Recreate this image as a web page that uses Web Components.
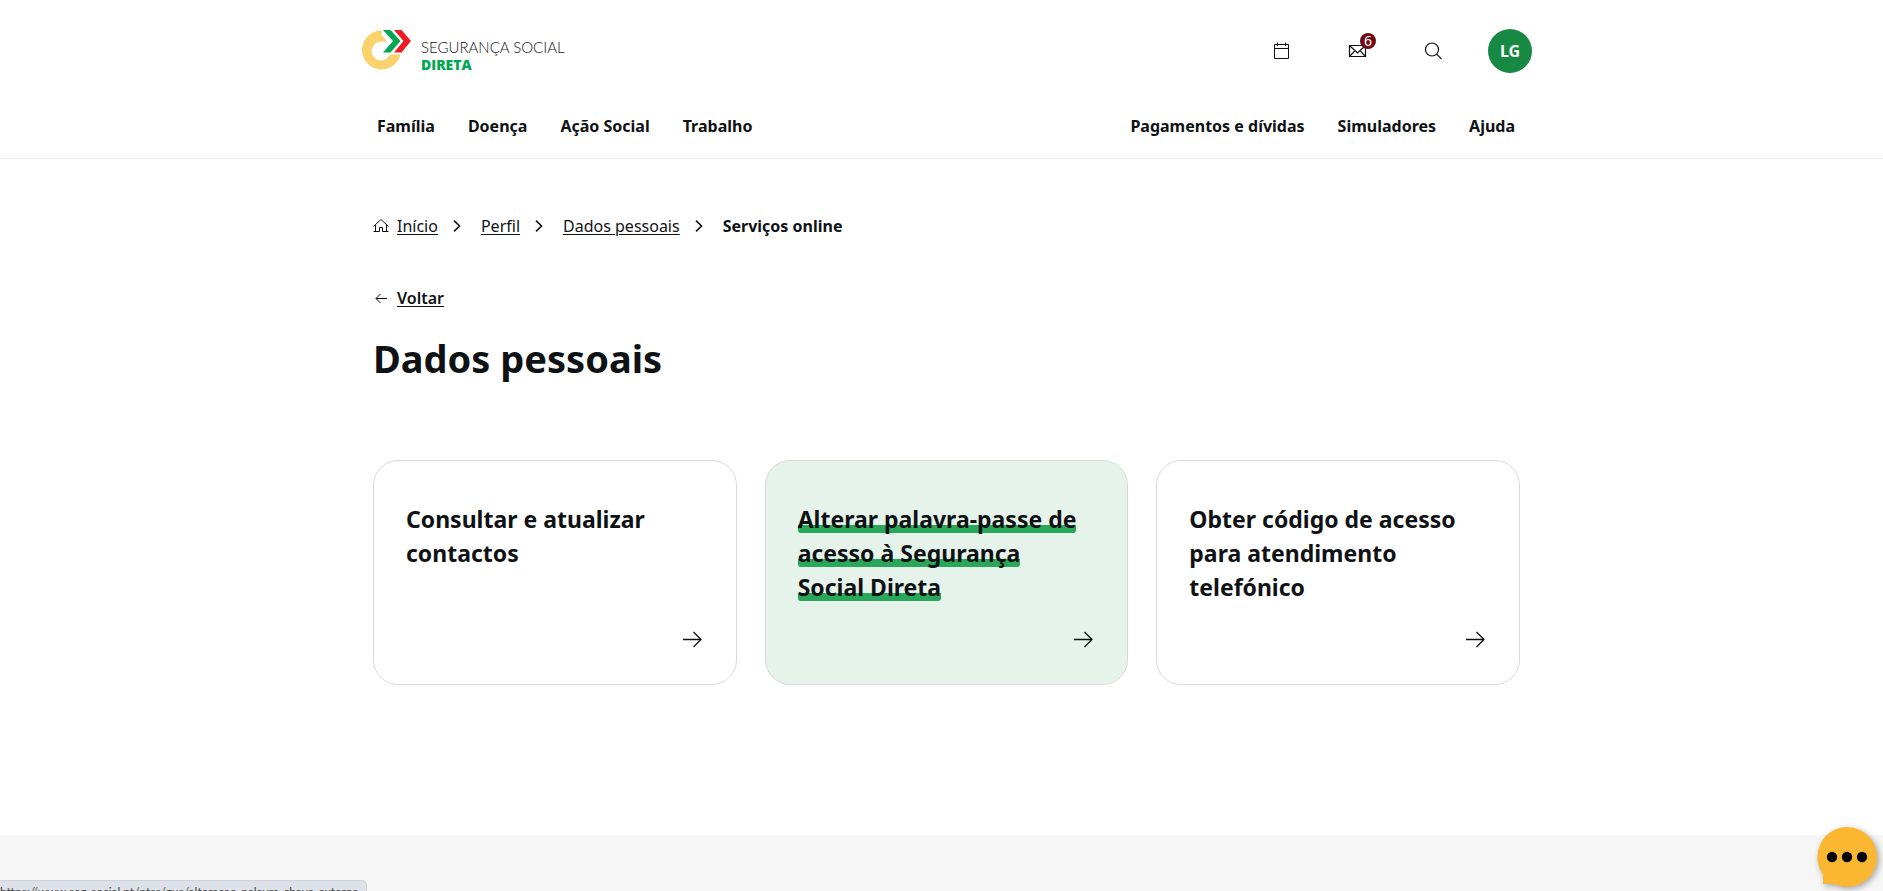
<!DOCTYPE html>
<html lang="pt">
<head>
<meta charset="utf-8">
<title>Dados pessoais</title>
<style>
html, body { margin: 0; height: 100%; }
body { font: 16px/24px "Noto Sans", "Open Sans", sans-serif; color: #0f1214; background: #fff; }
</style>
</head>
<body>
<ss-page></ss-page>
<script>
const define = (name, html) => customElements.define(name, class extends HTMLElement {
  constructor() {
    super();
    const t = document.createElement('template');
    t.innerHTML = html;
    this.attachShadow({ mode: 'open' }).append(t.content.cloneNode(true));
  }
});

define('ss-logo', `
<style>
:host { display: block; }
a { display: flex; gap: 10px; color: #111; text-decoration: none; }
svg { display: block; margin-top: 2px; }
.t { display: flex; flex-direction: column; padding-top: 11px; font: 300 15px/17px Lato, "Open Sans", sans-serif; white-space: nowrap; }
b { font: 800 14px/17px "Open Sans", sans-serif; color: #00a651; }
</style>
<a href="#">
<svg width="50" height="42" viewBox="0 0 50 42" aria-hidden="true">
<path d="M20.500 .5A19.500 19.500 0 1 0 39.500 24.500H29A9.500 9.500 0 1 1 20.500 11.500H26L20.500 5Z" fill="#fbd26b"/>
<path d="M22 0H29.500L39.500 11L29.500 22.500H22L32 11Z" fill="#00a651"/>
<path d="M33 0H40.500L50 11L40.500 22.500H33L42.500 11Z" fill="#ed1c24"/>
</svg>
<span class="t"><span>SEGURANÇA SOCIAL</span><b>DIRETA</b></span>
</a>`);

define('ss-icon-button', `
<style>
:host { display: block; }
button { position: relative; display: block; width: 20px; height: 20px; padding: 0; border: 0; background: none; color: inherit; cursor: pointer; }
::slotted(svg) { display: block; }
::slotted(.badge) { position: absolute; left: 12px; top: -8px; width: 16px; height: 16px; border-radius: 50%; background: #6f0a14; color: #fff; font: 14px/16px "Noto Sans", sans-serif; text-align: center; }
</style>
<button type="button"><slot></slot></button>`);

define('ss-nav', `
<style>
:host { display: block; }
nav { display: flex; gap: 33px; }
::slotted(a) { color: inherit; text-decoration: none; font-weight: 700; white-space: nowrap; }
</style>
<nav><slot></slot></nav>`);

define('ss-header', `
<style>
:host { display: block; border-bottom: 1px solid #ebebeb; padding: 28px 0 20px 10px; }
.in { max-width: 1171px; margin: 0 auto; }
.top, .bar, .tools { display: flex; align-items: center; }
.top, .bar { justify-content: space-between; }
.top { align-items: flex-end; }
.tools { gap: 56px; }
.avatar { width: 44px; height: 44px; margin-left: -12px; padding: 0; border: 0; border-radius: 50%; background: #178943; color: #fff; font: 700 16px/44px "Noto Sans", sans-serif; }
.bar { margin-top: 41px; padding: 0 17px 0 16px; }
svg { fill: none; stroke: currentColor; }
</style>
<header class="in">
<div class="top">
<ss-logo></ss-logo>
<div class="tools">
<ss-icon-button><svg width="20" height="20" viewBox="0 0 20 20"><path d="M2.500 3.500H16.500V17.500H2.500ZM2.500 7.500H16.500M5.500 1.500V5M13.500 1.500V5"/></svg></ss-icon-button>
<ss-icon-button><svg width="20" height="20" viewBox="0 0 20 20"><path d="M1.500 4.500H17.500V15.500H1.500ZM2 5L9.500 12L17 5M2 15L7 9.700M17 15L12 9.700" stroke-width="1.200"/></svg><span class="badge">6</span></ss-icon-button>
<ss-icon-button><svg width="20" height="20" viewBox="0 0 20 20"><circle cx="8" cy="8.500" r="6.500" stroke-width="1.200"/><path d="M12.700 13.200L17.500 18" stroke-width="1.200"/></svg></ss-icon-button>
<button class="avatar" type="button">LG</button>
</div>
</div>
<div class="bar">
<ss-nav><a href="#">Família</a><a href="#">Doença</a><a href="#">Ação Social</a><a href="#">Trabalho</a></ss-nav>
<ss-nav><a href="#">Pagamentos e dívidas</a><a href="#">Simuladores</a><a href="#">Ajuda</a></ss-nav>
</div>
</header>`);

define('ss-chevron', `
<style>
:host { display: block; margin: 0 20px 0 15px; }
svg { display: block; fill: none; stroke: currentColor; stroke-width: 1.600; }
</style>
<svg width="8" height="12" viewBox="0 0 8 12" aria-hidden="true"><path d="M1 .7L6.500 6L1 11.300"/></svg>`);

define('ss-breadcrumb', `
<style>
:host { display: block; }
ol { display: flex; align-items: center; margin: 0; padding: 0; list-style: none; }
li { display: flex; align-items: center; white-space: nowrap; }
a { color: inherit; text-decoration: underline; text-underline-offset: 2px; }
b { font-weight: 700; }
svg { display: block; margin-right: 8px; fill: none; stroke: currentColor; }
</style>
<nav aria-label="Localização"><ol>
<li><svg width="16" height="16" viewBox="0 0 16 16" aria-hidden="true"><path d="M.5 8.500L8 1.500L15.500 8.500M2.500 7V13.500M13.500 7V13.500M.5 13.500H6.500V9.500H9.500V13.500H15.500"/></svg><a href="#">Início</a><ss-chevron></ss-chevron></li>
<li><a href="#">Perfil</a><ss-chevron></ss-chevron></li>
<li><a href="#">Dados pessoais</a><ss-chevron></ss-chevron></li>
<li><b aria-current="page">Serviços online</b></li>
</ol></nav>`);

define('ss-back', `
<style>
:host { display: block; }
a { display: inline-flex; align-items: center; gap: 8px; color: inherit; font-weight: 600; text-underline-offset: 2px; }
svg { fill: none; stroke: currentColor; }
</style>
<a href="#"><svg width="16" height="16" viewBox="0 0 16 16" aria-hidden="true"><path d="M14 8.500H3M7.500 4L3 8.500L7.500 13"/></svg><slot></slot></a>`);

define('ss-card', `
<style>
:host { display: block; --g: #2aa85a; }
a { box-sizing: border-box; display: flex; flex-direction: column; justify-content: space-between; height: 100%; min-height: 225px; padding: 41px 32px 33px; border: 1px solid #d9dbda; border-radius: 25px; color: inherit; text-decoration: none; font: 700 23px/34px "Noto Sans", sans-serif; }
div { padding-right: 12px; }
svg { display: block; align-self: flex-end; fill: none; stroke: currentColor; stroke-width: 1.300; }
:host([active]) a { background: #e6f3ea; }
/* marker bar behind the text: square above, rounded lower corners */
:host([active]) span {
  background:
    linear-gradient(var(--g), var(--g)) 0 calc(100% - 6px) / 100% 4px no-repeat,
    linear-gradient(var(--g), var(--g)) 50% calc(100% - 2px) / calc(100% - 8px) 4px no-repeat,
    radial-gradient(circle at 100% 0, var(--g) 4px, transparent 5px) 0 calc(100% - 2px) / 4px 4px no-repeat,
    radial-gradient(circle at 0 0, var(--g) 4px, transparent 5px) 100% calc(100% - 2px) / 4px 4px no-repeat;
  -webkit-box-decoration-break: clone; box-decoration-break: clone;
}
</style>
<a href="#"><div><span><slot></slot></span></div>
<svg width="24" height="24" viewBox="0 0 24 24" aria-hidden="true"><path d="M3 12.500H21M13.500 5L21 12.500L13.500 20"/></svg></a>`);

define('ss-chat', `
<style>
:host { position: fixed; right: 6px; bottom: 4px; }
button { display: block; padding: 0; border: 0; background: none; }
svg { display: block; overflow: visible; filter: drop-shadow(2px 2px 3px #0005); }
</style>
<button type="button" aria-label="Conversa"><svg width="60" height="60" viewBox="0 0 60 60"><path d="M30 0A30 30 0 1 1 17 57H6V47.500A30 30 0 0 1 30 0Z" fill="#fbb731"/><circle cx="15" cy="30" r="5.200"/><circle cx="30" cy="30" r="5.200"/><circle cx="45" cy="30" r="5.200"/></svg></button>`);

define('ss-status', `
<style>
:host { position: fixed; left: 0; bottom: 0; height: 11px; overflow: hidden; }
div { box-sizing: border-box; height: 24px; padding: 0 8px 0 0; border: solid #cfd3d9; border-width: 1px 1px 0 0; border-radius: 0 5px 0 0; background: #dde1e8; color: #444; font: 12px/22px Lato, "Open Sans", sans-serif; white-space: nowrap; }
</style>
<div><slot></slot></div>`);

define('ss-page', `
<style>
:host { display: flex; flex-direction: column; min-height: 100%; overflow: hidden; }
main { padding: 55px 0 150px 10px; }
.in { max-width: 1147px; margin: 0 auto; }
ss-back { margin-top: 48px; }
h1 { margin: 18px 0 0; font: 700 38px/56px "Noto Sans", sans-serif; }
.cards { display: grid; grid-template-columns: repeat(3, 1fr); gap: 28px; margin-top: 74px; }
footer { flex: 1; min-height: 56px; background: #f6f6f6; }
</style>
<ss-header></ss-header>
<main><div class="in">
<ss-breadcrumb></ss-breadcrumb>
<ss-back>Voltar</ss-back>
<h1>Dados pessoais</h1>
<div class="cards">
<ss-card>Consultar e atualizar contactos</ss-card>
<ss-card active>Alterar palavra-passe de acesso à Segurança Social Direta</ss-card>
<ss-card>Obter código de acesso para atendimento telefónico</ss-card>
</div>
</div></main>
<footer></footer>
<ss-status>https://www.seg-social.pt/ptss/gus/alteracao-palavra-chave-externa</ss-status>
<ss-chat></ss-chat>`);
</script>
</body>
</html>
